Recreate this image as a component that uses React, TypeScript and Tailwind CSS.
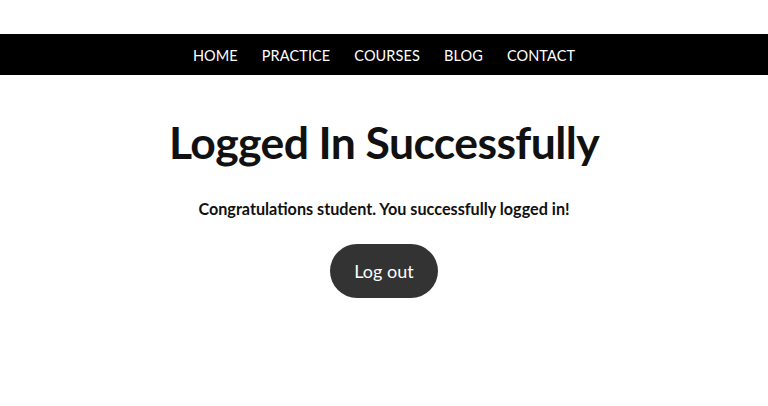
export default function App() {
  const links = ["HOME", "PRACTICE", "COURSES", "BLOG", "CONTACT"];
  return (
    <div className="min-h-screen bg-white font-['Lato',sans-serif] text-[#111]">
      <div className="h-[34px]" />
      <nav className="flex h-[41px] items-center justify-center gap-[24px] bg-black">
        {links.map((l) => (
          <a key={l} href="#" className="pt-[3px] text-[14.5px] tracking-[0.1px] text-white">
            {l}
          </a>
        ))}
      </nav>
      <main className="flex flex-col items-center">
        <h1 className="mt-[37px] text-[44.5px] font-bold leading-[60px] tracking-[-0.6px] text-[#111]">
          Logged In Successfully
        </h1>
        <p className="mt-[27px] text-[16.2px] font-bold leading-[20px]">
          Congratulations student. You successfully logged in!
        </p>
        <button className="mt-[25px] flex h-[54px] w-[108px] items-center justify-center rounded-full bg-[#333] pt-[1px] text-[18px] text-white">
          Log out
        </button>
      </main>
    </div>
  );
}
